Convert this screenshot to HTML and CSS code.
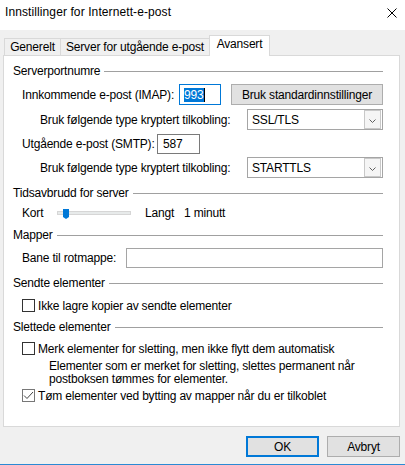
FILE: index.html
```html
<!DOCTYPE html>
<html lang="no">
<head>
<meta charset="utf-8">
<title>Innstillinger for Internett-e-post</title>
<link rel="stylesheet" href="styles.css">
</head>
<body>
<div class="window">
  <div class="titlebar">
    <span class="title">Innstillinger for Internett-e-post</span>
    <svg class="close" width="10" height="10" viewBox="0 0 10 10"><path d="M0.5 0.5L9.5 9.5M9.5 0.5L0.5 9.5" stroke="#000" stroke-width="1" fill="none"/></svg>
  </div>
  <div class="tabs">
    <div class="tab t1">Generelt</div>
    <div class="tab t2">Server for utgående e-post</div>
    <div class="tab active">Avansert</div>
  </div>
  <div class="panel">
    <div class="gh"><span>Serverportnumre</span><i class="rule"></i></div>
    <div class="row r-imap">
      <span class="w-imap">Innkommende e-post (IMAP):</span>
      <div class="port"><span class="sel">993</span><span class="caret"></span></div>
      <button class="btn std">Bruk standardinnstillinger</button>
    </div>
    <div class="row sub r-ssl">
      <span class="w-bruk">Bruk følgende type kryptert tilkobling:</span>
      <div class="combo"><span class="val">SSL/TLS</span><span class="arrow"><svg width="7" height="4" viewBox="0 0 7 4"><path d="M0.5 0.5L3.5 3.5L6.5 0.5" stroke="#606060" fill="none"/></svg></span></div>
    </div>
    <div class="row r-smtp">
      <span class="w-smtp">Utgående e-post (SMTP):</span>
      <div class="smtp">587</div>
    </div>
    <div class="row sub r-start">
      <span class="w-bruk">Bruk følgende type kryptert tilkobling:</span>
      <div class="combo"><span class="val">STARTTLS</span><span class="arrow"><svg width="7" height="4" viewBox="0 0 7 4"><path d="M0.5 0.5L3.5 3.5L6.5 0.5" stroke="#606060" fill="none"/></svg></span></div>
    </div>

    <div class="gh"><span>Tidsavbrudd for server</span><i class="rule"></i></div>
    <div class="row r-slider">
      <span class="w-kort">Kort</span>
      <div class="track"><svg class="thumb" width="6" height="10" viewBox="0 0 6 10"><path d="M0 0H6V8L3 10L0 8Z" fill="#0078d7"/></svg></div>
      <span class="w-langt">Langt</span>
      <span>1 minutt</span>
    </div>

    <div class="gh"><span>Mapper</span><i class="rule"></i></div>
    <div class="row r-bane">
      <span class="w-bane">Bane til rotmappe:</span>
      <div class="path"></div>
    </div>

    <div class="gh"><span>Sendte elementer</span><i class="rule"></i></div>
    <div class="row r-ikke">
      <span class="cb"></span>
      <span>Ikke lagre kopier av sendte elementer</span>
    </div>

    <div class="gh"><span>Slettede elementer</span><i class="rule"></i></div>
    <div class="row r-merk">
      <span class="cb"></span>
      <span>Merk elementer for sletting, men ikke flytt dem automatisk</span>
    </div>
    <p class="note">Elementer som er merket for sletting, slettes permanent når<br>postboksen tømmes for elementer.</p>
    <div class="row r-tom">
      <span class="cb checked"><svg width="11" height="11" viewBox="0 0 11 11"><path d="M1 5.5L4 8.5L10 2" stroke="#444" stroke-width="1" fill="none"/></svg></span>
      <span>Tøm elementer ved bytting av mapper når du er tilkoblet</span>
    </div>
  </div>
  <div class="buttons">
    <button class="btn dlg default">OK</button>
    <button class="btn dlg">Avbryt</button>
  </div>
</div>
</body>
</html>
```
FILE: styles.css
```css
* { box-sizing: border-box; }
html, body { margin: 0; padding: 0; }
body {
  width: 405px;
  height: 465px;
  overflow: hidden;
  background: #f0f0f0;
  font-family: "Liberation Sans", Arial, sans-serif;
  font-size: 12px;
  letter-spacing: -0.18px;
  color: #000;
}
.window {
  height: 465px;
  border-bottom: 1px solid #2a8ad4;
  display: flex;
  flex-direction: column;
}
.titlebar {
  height: 30px;
  flex: none;
  background: #fff;
  display: flex;
  align-items: flex-start;
  padding: 5px 8px 0 5px;
  line-height: 14px;
}
.title { flex: 1; letter-spacing: 0.1px; }
.close { margin-top: 3px; }

.tabs {
  display: flex;
  align-items: flex-end;
  margin: 5px 0 0 4px;
  height: 21px;
  flex: none;
}
.tab {
  height: 17px;
  margin-bottom: 1px;
  border-top: 1px solid #d9d9d9;
  border-right: 1px solid #d9d9d9;
  background: #f0f0f0;
  text-align: center;
  line-height: 14px;
  padding-top: 1px;
  white-space: nowrap;
}
.t1 { width: 57px; border-left: 1px solid #d9d9d9; }
.t2 { width: 149px; }
.tab.active {
  position: relative;
  z-index: 1;
  width: 61px;
  height: 21px;
  margin-bottom: 0;
  margin-left: -1px;
  border-left: 1px solid #d9d9d9;
  background: #fff;
}

.panel {
  flex: none;
  margin: -1px 0 0 3px;
  width: 397px;
  height: 372px;
  border: 1px solid #d9d9d9;
  background: #fff;
  padding: 0 16px 0 9px;
}
.gh {
  display: flex;
  align-items: center;
  height: 14px;
  line-height: 14px;
  margin-top: 8px;
  white-space: nowrap;
}
.gh .rule {
  flex: 1;
  height: 1px;
  background: #a0a0a0;
  margin-left: 4px;
}
.row {
  display: flex;
  align-items: center;
  margin-left: 9px;
  line-height: 14px;
  white-space: nowrap;
}
.row.sub { margin-left: 27px; }
.r-imap { margin-top: 6px; height: 21px; }
.r-ssl { margin-top: 4px; height: 21px; }
.r-smtp { margin-top: 4px; height: 20px; }
.r-start { margin-top: 3px; height: 21px; }
.r-slider { margin-top: 6px; height: 14px; }
.r-bane { margin-top: 6px; height: 20px; }
.r-ikke { margin-top: 9px; height: 13px; }
.r-merk { margin-top: 8px; height: 13px; }
.r-tom { margin-top: 3px; height: 13px; }

.w-imap { width: 157px; flex: none; }
.w-smtp { width: 135px; flex: none; }
.w-bruk { width: 207px; flex: none; }
.w-bane { width: 104px; flex: none; }
.w-kort { width: 35px; flex: none; }
.w-langt { width: 39px; flex: none; margin-left: 14px; }

.port {
  width: 42px;
  height: 21px;
  border: 1px solid #0078d7;
  background: #fff;
  display: flex;
  align-items: center;
  padding-left: 4px;
}
.sel { background: #0078d7; color: #fff; line-height: 14px; padding-right: 1px; }
.caret { width: 1px; height: 14px; background: #000; }

.btn {
  font: inherit;
  letter-spacing: inherit;
  color: #000;
  height: 21px;
  line-height: 14px;
  padding: 0;
  background: #e1e1e1;
  border: 1px solid #adadad;
  border-radius: 0;
}
.std { width: 152px; margin-left: 10px; }

.combo {
  width: 136px;
  height: 21px;
  border: 1px solid #a5a5a5;
  background: #fff;
  display: flex;
  align-items: center;
  padding-left: 4px;
}
.combo .val { flex: 1; }
.combo .arrow {
  width: 17px;
  height: 19px;
  margin-right: 1px;
  border: 1px solid #c8c8c8;
  background: #f5f5f5;
  display: flex;
  align-items: center;
  justify-content: center;
  padding-top: 2px;
}
.smtp {
  width: 43px;
  height: 20px;
  border: 1px solid #7a7a7a;
  background: #fff;
  padding-left: 5px;
  line-height: 18px;
}
.track {
  position: relative;
  width: 74px;
  height: 4px;
  background: #e7eaea;
  border: 1px solid #d6d6d6;
  flex: none;
}
.thumb {
  position: absolute;
  left: 5px;
  top: -3px;
}
.path {
  flex: 1;
  height: 20px;
  border: 1px solid #a5a5a5;
  background: #fff;
}
.cb {
  width: 13px;
  height: 13px;
  flex: none;
  border: 1px solid #333;
  background: #fff;
  margin-right: 3px;
  display: flex;
  align-items: center;
  justify-content: center;
}
.cb.checked { border-color: #777; }
.note {
  margin: 5px 0 0 36px;
  line-height: 13px;
  white-space: nowrap;
}
.buttons {
  display: flex;
  justify-content: flex-end;
  gap: 8px;
  margin: 9px 5px 0 0;
}
.dlg { width: 73px; }
.default { border: 2px solid #0078d7; }
```
